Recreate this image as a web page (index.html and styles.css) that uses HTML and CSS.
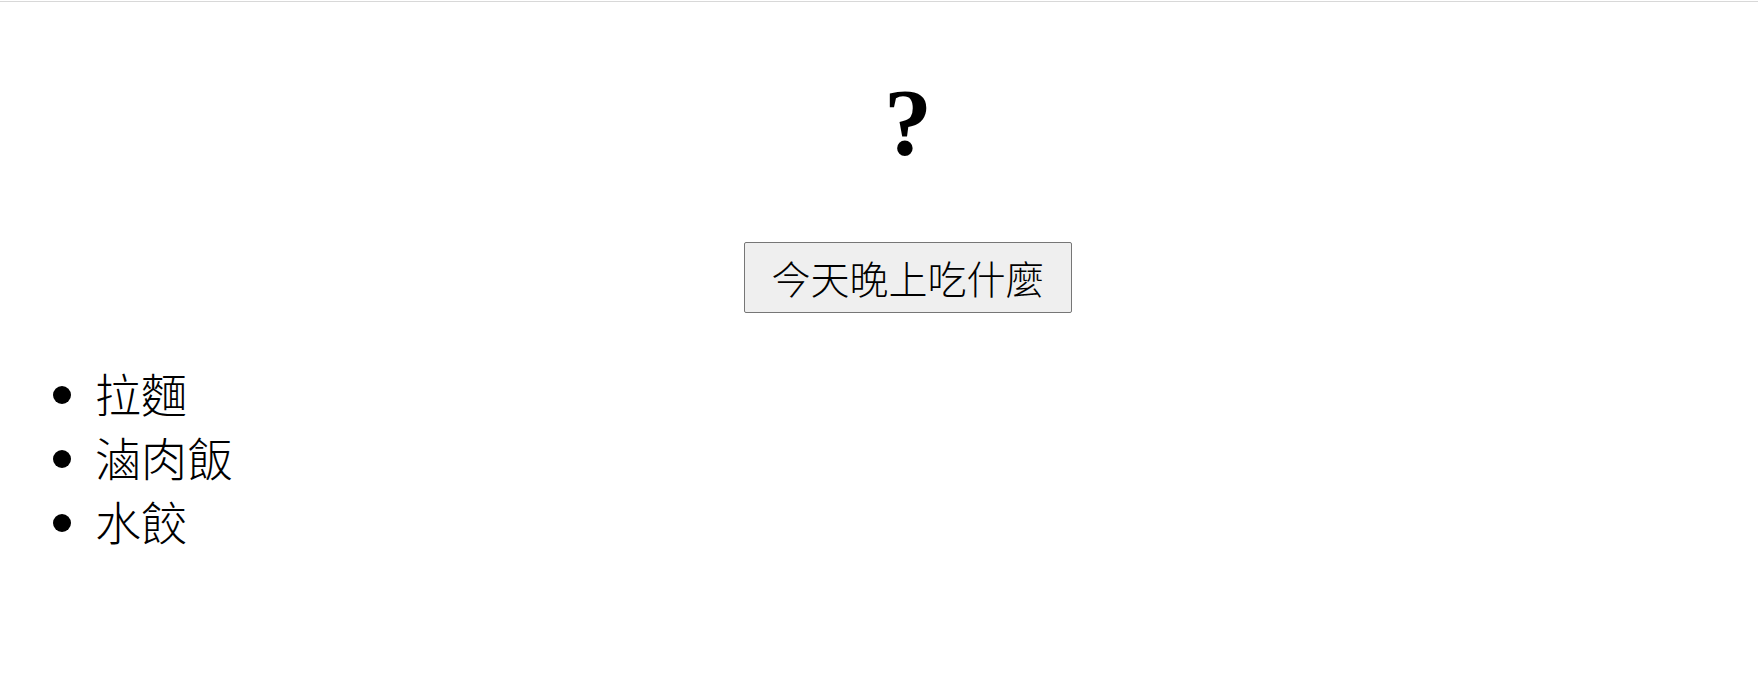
FILE: index.html
```html
<!DOCTYPE html>
<html lang="zh-Hant">
<head>
<meta charset="utf-8">
<title>今天晚上吃什麼</title>
<link rel="stylesheet" href="styles.css">
</head>
<body>
<div class="topline"></div>
<main class="page">
  <section class="hero">
    <h1 class="answer">?</h1>
    <button class="pick" type="button">今天晚上吃什麼</button>
  </section>
  <ul class="menu">
    <li>拉麵</li>
    <li>滷肉飯</li>
    <li>水餃</li>
  </ul>
</main>
</body>
</html>
```
FILE: styles.css
```css
html, body {
  margin: 0;
  padding: 0;
  background: #ffffff;
}
body {
  font-family: "Noto Sans CJK TC", "Noto Sans", sans-serif;
  color: #000000;
}
.topline {
  margin-top: 1px;
  height: 1px;
  background: #d8d8d8;
}
.page {
  padding: 0 8px;
}
.hero {
  display: flex;
  flex-direction: column;
  align-items: center;
  padding-left: 58px;
}
.answer {
  font-family: "Liberation Serif", "Times New Roman", serif;
  font-weight: bold;
  font-size: 96px;
  line-height: 1.15;
  margin: 66px 0 0 0;
}
.pick {
  margin-top: 64px;
  font-family: "Noto Sans CJK TC", sans-serif;
  font-weight: 300;
  font-size: 39px;
  line-height: 1.2;
  padding: 11px 26px;
  background: #efefef;
  border: 1px solid #767676;
  border-radius: 2px;
  color: #000;
}
.menu {
  margin: 47px 0 0 0;
  padding-left: 87px;
  font-size: 46px;
  font-weight: 300;
  line-height: 64px;
}
```
